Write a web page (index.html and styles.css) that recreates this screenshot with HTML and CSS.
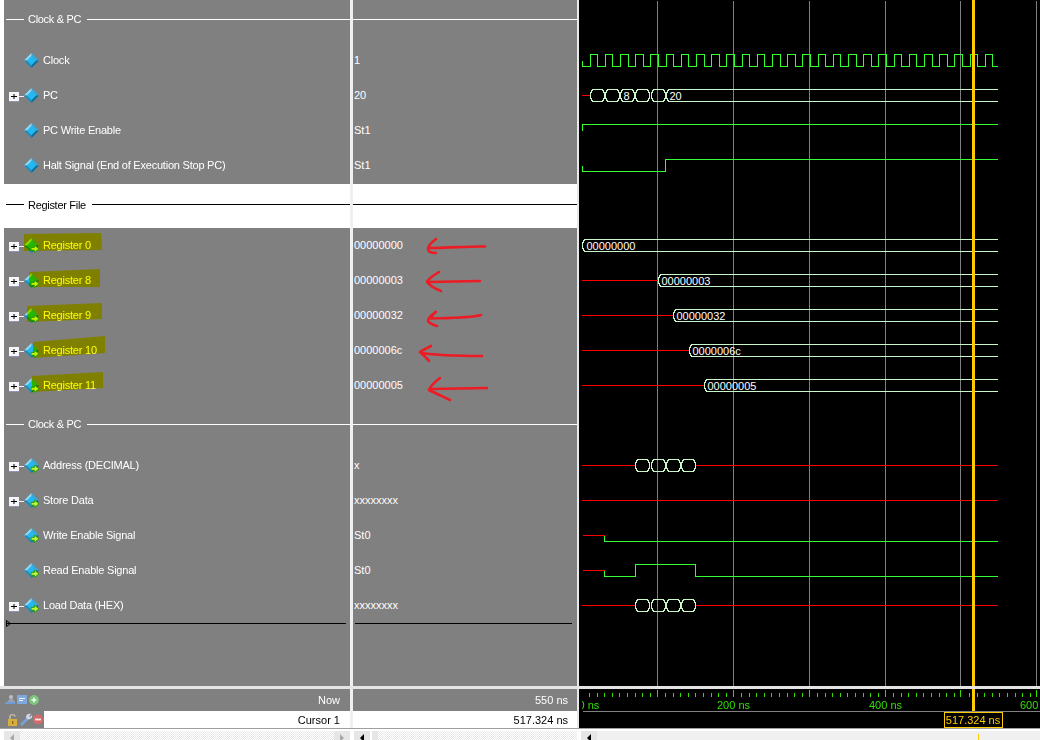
FILE: index.html
```html
<!DOCTYPE html>
<html lang="en">
<head>
    <meta charset="UTF-8">
    <meta name="viewport" content="width=device-width, initial-scale=1.0">
    <title>Wave</title>
    <link rel="stylesheet" href="styles.css">
</head>
<body>
    <!-- Shared icons -->
    <svg class="icon-defs" width="0" height="0">
        <symbol id="diamond" viewBox="0 0 16 16">
            <polygon points="8,0 16,8 8,8" fill="#35a9dc"/>
            <polygon points="8,0 0,8 8,8" fill="#8fdcf8"/>
            <polygon points="0,8 8,16 8,8" fill="#1b8dc0"/>
            <polygon points="16,8 8,16 8,8" fill="#0a6d9a"/>
            <polygon points="8,3 13,8 8,13 3,8" fill="#25b8f0"/>
        </symbol>
        <symbol id="arrow-in" viewBox="0 0 16 16">
            <polygon points="8,0 16,8 8,8" fill="#35a9dc"/>
            <polygon points="8,0 0,8 8,8" fill="#8fdcf8"/>
            <polygon points="0,8 8,16 8,8" fill="#1b8dc0"/>
            <polygon points="16,8 8,16 8,8" fill="#0a6d9a"/>
            <polygon points="8,3 13,8 8,13 3,8" fill="#25b8f0"/>
            <path d="M7.5 10h3.5V7.5l5 4-5 4V13H7.5z" fill="#c4f23a" stroke="#1f9c10" stroke-width="1"/>
        </symbol>
        <symbol id="tree-plus" viewBox="0 0 15 12">
            <rect x="10" y="5" width="5" height="1" fill="#f2f2f2"/>
            <rect x="0" y="1" width="10" height="10" fill="#f6f6fb"/>
            <rect x="0" y="10" width="10" height="1" fill="#8f96b8"/>
            <rect x="2" y="5" width="6" height="1" fill="#000"/>
            <rect x="4.5" y="3" width="1" height="5" fill="#000"/>
        </symbol>
        <symbol id="cell" viewBox="0 0 16 13">
            <path class="bus" d="M2.5 .5H12.5V1.5H13.5V3.5H14.5V9.5H13.5V11.5H12.5V12.5H2.5V11.5H1.5V9.5H.5V3.5H1.5V1.5H2.5Z"/>
        </symbol>
    </svg>

    <main class="panes">
        <!-- Signal names -->
        <section class="col col-names">
            <div class="group group-top"><span class="group-title">Clock &amp; PC</span></div>
            <div class="row"><span class="expand"></span><svg class="sig-icon"><use href="#diamond"/></svg><span>Clock</span></div>
            <div class="row"><span class="expand"><svg class="tree"><use href="#tree-plus"/></svg></span><svg class="sig-icon"><use href="#diamond"/></svg><span>PC</span></div>
            <div class="row"><span class="expand"></span><svg class="sig-icon"><use href="#diamond"/></svg><span>PC Write Enable</span></div>
            <div class="row"><span class="expand"></span><svg class="sig-icon"><use href="#diamond"/></svg><span>Halt Signal (End of Execution Stop PC)</span></div>

            <div class="group group-file"><span class="group-title">Register File</span></div>
            <div class="row"><span class="expand"><svg class="tree"><use href="#tree-plus"/></svg></span><svg class="sig-icon"><use href="#arrow-in"/></svg><span>Register 0</span></div>
            <div class="row"><span class="expand"><svg class="tree"><use href="#tree-plus"/></svg></span><svg class="sig-icon"><use href="#arrow-in"/></svg><span>Register 8</span></div>
            <div class="row"><span class="expand"><svg class="tree"><use href="#tree-plus"/></svg></span><svg class="sig-icon"><use href="#arrow-in"/></svg><span>Register 9</span></div>
            <div class="row"><span class="expand"><svg class="tree"><use href="#tree-plus"/></svg></span><svg class="sig-icon"><use href="#arrow-in"/></svg><span>Register 10</span></div>
            <div class="row"><span class="expand"><svg class="tree"><use href="#tree-plus"/></svg></span><svg class="sig-icon"><use href="#arrow-in"/></svg><span>Register 11</span></div>

            <div class="group group-low"><span class="group-title">Clock &amp; PC</span></div>
            <div class="row"><span class="expand"><svg class="tree"><use href="#tree-plus"/></svg></span><svg class="sig-icon"><use href="#arrow-in"/></svg><span>Address (DECIMAL)</span></div>
            <div class="row"><span class="expand"><svg class="tree"><use href="#tree-plus"/></svg></span><svg class="sig-icon"><use href="#arrow-in"/></svg><span>Store Data</span></div>
            <div class="row"><span class="expand"></span><svg class="sig-icon"><use href="#arrow-in"/></svg><span>Write Enable Signal</span></div>
            <div class="row"><span class="expand"></span><svg class="sig-icon"><use href="#arrow-in"/></svg><span>Read Enable Signal</span></div>
            <div class="row"><span class="expand"><svg class="tree"><use href="#tree-plus"/></svg></span><svg class="sig-icon"><use href="#arrow-in"/></svg><span>Load Data (HEX)</span></div>
            <div class="end-line end-line-names">
                <svg class="end-mark" width="5" height="7" viewBox="0 0 5 7"><path d="M.5 .5V6.5L4.5 3.5Z" fill="none" stroke="#000"/></svg>
            </div>

            <!-- Yellow highlighter marks drawn over the names -->
            <svg class="highlighter" viewBox="0 0 346 686" width="346" height="686">
                <polygon points="20,234 97,233 98,250 20,251"/>
                <polygon points="25,272 96,269 96,287 25,287"/>
                <polygon points="23,306 98,303 98,319 23,322"/>
                <polygon points="29,342 101,336 101,353 29,358"/>
                <polygon points="28,376 99,372 99,388 28,392"/>
            </svg>
        </section>

        <!-- Signal values -->
        <section class="col col-values">
            <div class="group group-top"></div>
            <div class="row">1</div>
            <div class="row">20</div>
            <div class="row">St1</div>
            <div class="row">St1</div>
            <div class="group group-file"></div>
            <div class="row">00000000</div>
            <div class="row">00000003</div>
            <div class="row">00000032</div>
            <div class="row">0000006c</div>
            <div class="row">00000005</div>
            <div class="group group-low"></div>
            <div class="row">x</div>
            <div class="row">xxxxxxxx</div>
            <div class="row">St0</div>
            <div class="row">St0</div>
            <div class="row">xxxxxxxx</div>
            <div class="end-line end-line-values"></div>

            <!-- Hand drawn red arrows -->
            <svg class="arrows" viewBox="353 0 224 686" width="224" height="686">
                <path d="M485 246.5C470 246 450 248 430 248M436 239C432 242 428 246 428 249C428 252 432 253 436 253"/>
                <path d="M480 281L428 282M439 272C434 275 428 279 427 282C430 286 436 289 441 291"/>
                <path d="M481 315C470 318 450 318 431 318.5C433 314 436 311 436 312C431 315 428 318 428 321C430 324 434 325 437 326"/>
                <path d="M482 356C460 356 440 356 422 353M431 346C427 348 423 350 420 352C423 355 427 358 429 361"/>
                <path d="M487 388L431 389M440 378C436 381 431 385 429 390C435 393 444 397 450 400"/>
            </svg>
        </section>

        <!-- Waveforms -->
        <section class="col col-waves">
            <svg class="wave-canvas" viewBox="579 0 461 686" width="461" height="686">
                <g transform="translate(.5 .5)">
                    <path class="grid" d="M657 0V686M733 0V686M809 0V686M885 0V686M960 0V686M1036 0V686"/>

                    <!-- Clock -->
                    <path class="green" d="M582 61V66H589.6
                        V54h7.6V66h7.6V54h7.6V66h7.6V54h7.6V66h7.6V54h7.6V66h7.6V54h7.6V66h7.6
                        V54h7.6V66h7.6V54h7.6V66h7.6V54h7.6V66h7.6V54h7.6V66h7.6V54h7.6V66h7.6
                        V54h7.6V66h7.6V54h7.6V66h7.6V54h7.6V66h7.6V54h7.6V66h7.6V54h7.6V66h7.6
                        V54h7.6V66h7.6V54h7.6V66h7.6V54h7.6V66h7.6V54h7.6V66h7.6V54h7.6V66h7.6
                        V54h7.6V66h7.6V54h7.6V66h7.6V54h7.6V66h7.6V54h7.6V66h7.6V54h7.6V66h7.6
                        V54h7.6V66h7.6
                        V54h7.6V66H997"/>

                    <!-- PC -->
                    <path class="red" d="M582 95H589"/>
                    <use href="#cell" x="589.5" y="88.5" width="16" height="13"/>
                    <use href="#cell" x="604.5" y="88.5" width="16" height="13"/>
                    <use href="#cell" x="619.5" y="88.5" width="16" height="13"/>
                    <use href="#cell" x="634.5" y="88.5" width="16" height="13"/>
                    <use href="#cell" x="650.5" y="88.5" width="16" height="13"/>
                    <path class="bus" d="M997 89H668V90H667V92H666V98H667V100H668V101H997"/>
                    <text class="bus-label" x="623" y="99">8</text>
                    <text class="bus-label" x="669" y="99">20</text>

                    <path class="green" d="M582 130V124H997"/>
                    <path class="green" d="M582 166V171H665V159H997"/>

                    <!-- Registers -->
                    <path class="bus" d="M997 239H584V240H583V242H582V248H583V250H584V251H997"/>
                    <text class="bus-label" x="586" y="249">00000000</text>
                    <path class="red" d="M582 280H657"/>
                    <path class="bus" d="M997 274H660V275H659V277H658V283H659V285H660V286H997"/>
                    <text class="bus-label" x="661" y="284">00000003</text>
                    <path class="red" d="M582 315H672"/>
                    <path class="bus" d="M997 309H675V310H674V312H673V318H674V320H675V321H997"/>
                    <text class="bus-label" x="676" y="319">00000032</text>
                    <path class="red" d="M582 350H688"/>
                    <path class="bus" d="M997 344H691V345H690V347H689V353H690V355H691V356H997"/>
                    <text class="bus-label" x="692" y="354">0000006c</text>
                    <path class="red" d="M582 385H703"/>
                    <path class="bus" d="M997 379H706V380H705V382H704V388H705V390H706V391H997"/>
                    <text class="bus-label" x="707" y="389">00000005</text>

                    <!-- Memory signals -->
                    <path class="red" d="M582 465H635M696 465H997"/>
                    <use href="#cell" x="634.5" y="458.5" width="16" height="13"/>
                    <use href="#cell" x="650.5" y="458.5" width="16" height="13"/>
                    <use href="#cell" x="665.5" y="458.5" width="16" height="13"/>
                    <use href="#cell" x="680.5" y="458.5" width="16" height="13"/>
                    <path class="red" d="M582 500H997"/>
                    <path class="red" d="M583 535H604"/>
                    <path class="green" d="M604 536V541H997"/>
                    <path class="red" d="M583 570H604"/>
                    <path class="green" d="M604 571V576H635V564H695V576H997"/>
                    <path class="red" d="M582 605H635M696 605H997"/>
                    <use href="#cell" x="634.5" y="598.5" width="16" height="13"/>
                    <use href="#cell" x="650.5" y="598.5" width="16" height="13"/>
                    <use href="#cell" x="665.5" y="598.5" width="16" height="13"/>
                    <use href="#cell" x="680.5" y="598.5" width="16" height="13"/>
                </g>
                <rect class="cursor-bar" x="972" y="0" width="3" height="686"/>
            </svg>
        </section>
    </main>

    <footer class="footer">
        <div class="foot-col foot-names">
            <div class="now-row">
                <span class="tool-icons">
                    <svg width="34" height="12" viewBox="0 0 34 12">
                        <circle cx="6" cy="3" r="2" fill="#b9bdc6"/>
                        <path d="M2 8L5 5H8L10 8Z" fill="#9aa0ad"/>
                        <path d="M0 9H10" stroke="#6e9cd8" stroke-width="2"/>
                        <rect x="12" y="1" width="10" height="9" fill="#7fa9dd"/>
                        <rect x="14" y="4" width="6" height="1" fill="#eef3fb"/>
                        <rect x="14" y="6" width="4" height="1" fill="#eef3fb"/>
                        <circle cx="29" cy="6" r="5" fill="#7cc47c"/>
                        <path d="M26.5 6H31.5M29 3.5V8.5" stroke="#eafbea" stroke-width="1.6"/>
                    </svg>
                </span>
                <span class="now-label">Now</span>
            </div>
            <div class="cursor-row">
                <span class="tool-icons tool-icons-cursor">
                    <svg width="36" height="13" viewBox="0 0 36 13">
                        <path d="M2 6V3.5C2 1 7 1 7 3.5" fill="none" stroke="#c9c2a8" stroke-width="1.4"/>
                        <rect x="0" y="6" width="9" height="7" fill="#d9ae3e"/>
                        <rect x="4" y="8" width="1.4" height="3" fill="#8a6a18"/>
                        <path d="M13 12L20 5" stroke="#7aa2d8" stroke-width="2.6"/>
                        <path d="M18 4C18 2 20 0 23 1L21 3L22 4L24 2C25 5 22 7 19 6Z" fill="#cfd8e8"/>
                        <circle cx="30" cy="6.5" r="5" fill="#d46a6a"/>
                        <rect x="27" y="5.6" width="6" height="1.8" fill="#f6e6e6"/>
                    </svg>
                </span>
                <span class="cursor-label">Cursor 1</span>
            </div>
        </div>
        <div class="foot-col foot-values">
            <div class="now-row"><span class="now-label">550 ns</span></div>
            <div class="cursor-row"><span class="cursor-label">517.324 ns</span></div>
        </div>
        <div class="foot-col foot-ruler">
            <svg class="ruler" viewBox="579 689 461 39" width="461" height="39">
                <g transform="translate(.5 .5)">
                    <path class="tick" d="M589 692V696M597 692V696M604 692V696M612 692V696M619 692V696M627 692V696M635 692V696M642 692V696M650 692V696M665 692V696M673 692V696M680 692V696M688 692V696M695 692V696M703 692V696M711 692V696M718 692V696M726 692V696M741 692V696M749 692V696M756 692V696M764 692V696M771 692V696M779 692V696M787 692V696M794 692V696M802 692V696M817 692V696M825 692V696M832 692V696M840 692V696M847 692V696M855 692V696M863 692V696M870 692V696M878 692V696M893 692V696M901 692V696M908 692V696M916 692V696M923 692V696M931 692V696M939 692V696M946 692V696M954 692V696M969 692V696M977 692V696M984 692V696M992 692V696M999 692V696M1007 692V696M1015 692V696M1022 692V696M1030 692V696M657 689V696M733 689V696M809 689V696M885 689V696M960 689V696M1036 689V696"/>
                    <path class="grid" d="M582 711H1040"/>
                </g>
                <rect class="cursor-bar" x="972" y="689" width="3" height="22"/>
                <text class="ruler-label" x="578.5" y="709">0 ns</text>
                <rect class="ruler-mask" x="579" y="700" width="3" height="11"/>
                <text class="ruler-label" x="717" y="709">200 ns</text>
                <text class="ruler-label" x="869" y="709">400 ns</text>
                <text class="ruler-label" x="1020" y="709">600 ns</text>
                <rect class="cursor-box" x="944.5" y="712.5" width="58" height="15"/>
                <text class="cursor-box-label" x="973" y="724">517.324 ns</text>
            </svg>
        </div>
    </footer>

    <div class="scrollbars">
        <div class="scroll scroll-names">
            <span class="scroll-btn"><i class="tri tri-left tri-soft"></i></span>
            <span class="scroll-track scroll-hatch"></span>
            <span class="scroll-btn"><i class="tri tri-right tri-soft"></i></span>
        </div>
        <div class="scroll scroll-values">
            <span class="scroll-btn"><i class="tri tri-left"></i></span>
            <span class="scroll-thumb"></span>
            <span class="scroll-track scroll-hatch"></span>
        </div>
        <div class="scroll scroll-waves">
            <span class="scroll-btn"><i class="tri tri-left"></i></span>
            <span class="scroll-track"><i class="cursor-mark"></i></span>
        </div>
    </div>
</body>
</html>
```

FILE: styles.css
```css
html, body {
    margin: 0;
    padding: 0;
}

body {
    width: 1040px;
    height: 740px;
    overflow: hidden;
    background: #fff;
    font-family: "Liberation Sans", Arial, sans-serif;
    font-size: 11px;
    color: #fff;
}

.icon-defs {
    position: absolute;
}

.panes {
    display: flex;
    height: 686px;
}

.col {
    position: relative;
    box-sizing: border-box;
    height: 686px;
    background: #808080;
}

.col-names {
    width: 350px;
    border-left: 4px solid #fff;
    letter-spacing: -0.22px;
}

.col-values {
    width: 227px;
    border-left: 3px solid #f0f0f0;
}

.col-waves {
    width: 463px;
    border-left: 2px solid #e8e8e8;
    background: #000;
}

.wave-canvas {
    display: block;
}

/* Rows */
.row {
    display: flex;
    align-items: center;
    height: 35px;
    padding-left: 5px;
    padding-bottom: 1px;
    box-sizing: border-box;
}

.col-values .row {
    padding-left: 1px;
}

.expand {
    width: 15px;
    height: 12px;
    margin-top: 3px;
    flex: none;
}

.tree {
    display: block;
    width: 15px;
    height: 12px;
}

.sig-icon {
    width: 15px;
    height: 15px;
    flex: none;
    margin-top: 1px;
    margin-right: 4px;
}

/* Divider rows */
.group {
    display: flex;
    align-items: center;
    box-sizing: border-box;
}

.group::after {
    content: "";
    flex: 1;
    height: 1px;
    background: #fff;
}

.group-top {
    height: 43px;
    padding-bottom: 5px;
}

.group-file {
    height: 44px;
    margin-top: 1px;
    padding-bottom: 3px;
    background: #fff;
    color: #000;
}

.group-file::after,
.group-file .group-title::before {
    background: #000;
}

.group-low {
    height: 45px;
    padding-bottom: 3px;
}

.group-title {
    display: flex;
    align-items: center;
    padding-left: 2px;
    padding-right: 6px;
    letter-spacing: -0.3px;
}

.group-title::before {
    content: "";
    width: 18px;
    height: 1px;
    margin-right: 4px;
    background: #fff;
}

.end-line {
    position: relative;
    height: 1px;
    background: #000;
}

.end-line-names {
    margin-left: 2px;
    width: 340px;
}

.end-mark {
    position: absolute;
    top: -3px;
    left: 0;
}

.end-line-values {
    margin-left: 2px;
    width: 217px;
}

/* Annotations over the panes */
.highlighter {
    position: absolute;
    top: 0;
    left: 0;
    mix-blend-mode: multiply;
    fill: #ffff00;
}

.arrows {
    position: absolute;
    top: 0;
    left: 0;
    fill: none;
    stroke: #ed1c24;
    stroke-width: 2.6;
    stroke-linecap: round;
    stroke-linejoin: round;
}

/* Wave drawing */
.grid,
.green,
.red,
.bus,
.tick {
    fill: none;
    stroke-width: 1;
    stroke-linecap: square;
    shape-rendering: crispEdges;
}

.grid { stroke: #808080; stroke-linecap: butt; }
.tick { stroke: #33e000; stroke-linecap: butt; }
.green { stroke: #33ff33; }
.red { stroke: #ff0000; }
.bus { stroke: #c8f8c8; }

.cursor-bar {
    fill: #ffcc00;
}

.bus-label {
    fill: #fff;
    font-size: 11px;
}

.ruler-label {
    fill: #33e000;
    font-size: 11px;
}

.ruler-mask {
    fill: #000;
}

.cursor-box {
    fill: #000;
    stroke: #ffcc00;
}

.cursor-box-label {
    fill: #ffcc00;
    font-size: 11px;
    text-anchor: middle;
}

/* Footer */
.footer {
    display: flex;
    height: 39px;
    box-sizing: content-box;
    border-top: 3px solid #e4e4e4;
    border-bottom: 1px solid #a0a0a0;
}

.foot-col {
    box-sizing: border-box;
}

.foot-names {
    width: 350px;
}

.foot-values {
    width: 227px;
    border-left: 3px solid #f0f0f0;
}

.foot-ruler {
    width: 463px;
    border-left: 2px solid #e8e8e8;
    background: #000;
}

.ruler {
    display: block;
}

.now-row {
    display: flex;
    align-items: center;
    justify-content: space-between;
    height: 22px;
    background: #808080;
}

.cursor-row {
    display: flex;
    align-items: center;
    justify-content: space-between;
    height: 17px;
    background: #fff;
    color: #000;
}

.foot-names .now-row,
.foot-names .cursor-row {
    padding-right: 10px;
}

.foot-values .now-row,
.foot-values .cursor-row {
    justify-content: flex-end;
    padding-right: 9px;
}

.tool-icons {
    display: flex;
    padding-left: 5px;
}

.tool-icons-cursor {
    align-self: stretch;
    align-items: center;
    width: 36px;
    padding-left: 8px;
    background: #808080;
}

.cursor-label {
    margin-left: auto;
}

/* Scrollbars */
.scrollbars {
    display: flex;
    height: 11px;
    padding-top: 2px;
    box-sizing: border-box;
    background: #fff;
}

.scroll {
    display: flex;
    box-sizing: border-box;
}

.scroll-names {
    width: 350px;
    padding-left: 4px;
}

.scroll-values {
    width: 227px;
    padding-left: 4px;
}

.scroll-waves {
    width: 463px;
    padding-left: 4px;
}

.scroll-btn {
    display: flex;
    justify-content: center;
    padding-top: 3px;
    box-sizing: border-box;
    width: 16px;
    background: #e6e6e6;
}

.scroll-thumb {
    width: 6px;
    margin-left: 2px;
    background: #e6e6e6;
}

.scroll-track {
    position: relative;
    flex: 1;
    background: #f0f0f0;
}

.scroll-hatch {
    background: repeating-conic-gradient(#fff 0 25%, #e8e8e8 0 50%) 0 0 / 2px 2px;
}

.tri {
    width: 0;
    height: 0;
    border-top: 4px solid transparent;
    border-bottom: 4px solid transparent;
}

.tri-left { border-right: 4px solid #000; }
.tri-right { border-left: 4px solid #000; }
.tri-soft { border-left-color: #a8a8a8; border-right-color: #a8a8a8; }

.cursor-mark {
    position: absolute;
    top: 3px;
    left: 381px;
    width: 1px;
    height: 6px;
    background: #ffcc00;
}
```
